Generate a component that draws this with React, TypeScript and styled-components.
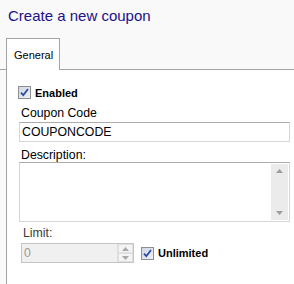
import React from "react";
import styled, { createGlobalStyle } from "styled-components";

const GlobalStyle = createGlobalStyle`
  html, body {
    margin: 0;
    padding: 0;
    background: #f9f9f9;
    font-family: "Liberation Sans", Arial, sans-serif;
  }
`;

const Page = styled.div`
  width: 294px;
  height: 284px;
  overflow: hidden;
  display: flex;
  flex-direction: column;
`;

const Title = styled.h1`
  margin: 0;
  padding: 7px 0 0 8px;
  height: 31px;
  box-sizing: border-box;
  font-size: 15px;
  line-height: 18px;
  font-weight: normal;
  color: #22108a;
`;

const TabBar = styled.div`
  display: flex;
  margin-top: 7px;
  padding-left: 6px;
  border-bottom: 1px solid #a3a3a3;
`;

const Tab = styled.div<{ $active?: boolean }>`
  width: 54px;
  height: 32px;
  box-sizing: border-box;
  border: 1px solid #a3a3a3;
  border-bottom: none;
  margin-bottom: -1px;
  background: ${(p) => (p.$active ? "#fff" : "#eee")};
  display: flex;
  align-items: center;
  padding-left: 7px;
  font-size: 11px;
  color: #000;
`;

const Panel = styled.div`
  flex: 1;
  margin-left: 6px;
  border-left: 1px solid #a3a3a3;
  background: #fff;
  padding: 16px 4px 0 12px;
  display: flex;
  flex-direction: column;
`;

const CheckRow = styled.label`
  display: flex;
  align-items: center;
  gap: 4px;
  height: 13px;
  font-size: 11px;
  font-weight: bold;
  color: #000;
`;

const Box = styled.span`
  width: 13px;
  height: 13px;
  box-sizing: border-box;
  border: 1px solid #8e8f8f;
  background: linear-gradient(135deg, #cfd6e6 0%, #eef1f7 100%);
  display: flex;
  align-items: center;
  justify-content: center;
  svg {
    display: block;
  }
`;

const Label = styled.div<{ $muted?: boolean }>`
  font-size: 12.3px;
  line-height: 14px;
  padding-left: 2px;
  color: ${(p) => (p.$muted ? "#3a3a3a" : "#000")};
`;

const TextInput = styled.div`
  height: 20px;
  box-sizing: border-box;
  border: 1px solid #d6d6d6;
  border-top-color: #acacac;
  background: #fff;
  font-size: 12.3px;
  line-height: 18px;
  padding-left: 2px;
  color: #000;
`;

const TextArea = styled.div`
  height: 60px;
  box-sizing: border-box;
  border: 1px solid #d6d6d6;
  border-top-color: #acacac;
  background: #fff;
  display: flex;
  justify-content: flex-end;
  padding: 1px;
`;

const ScrollTrack = styled.div`
  width: 17px;
  background: #ebebeb;
  display: flex;
  flex-direction: column;
  justify-content: space-between;
  align-items: center;
  padding: 5px 0;
`;

const LimitBlock = styled.div`
  margin-left: 2px;
  display: flex;
  flex-direction: column;
`;

const LimitRow = styled.div`
  display: flex;
  align-items: center;
  gap: 7px;
  margin-top: 3px;
`;

const NumberBox = styled.div`
  width: 113px;
  height: 20px;
  box-sizing: border-box;
  border: 1px solid #c4c4c4;
  background: #f0f0f0;
  display: flex;
  justify-content: space-between;
  font-size: 12.3px;
  line-height: 18px;
  color: #9a9a9a;
  padding-left: 2px;
`;

const Spinner = styled.div`
  width: 15px;
  display: flex;
  flex-direction: column;
  border-left: 1px solid #dcdcdc;
`;

const SpinButton = styled.div`
  flex: 1;
  background: #f4f4f4;
  border: 1px solid #e0e0e0;
  display: flex;
  align-items: center;
  justify-content: center;
`;

const Arrow = ({ up, color = "#a8a8a8" }: { up?: boolean; color?: string }) => (
  <svg width="7" height="4" viewBox="0 0 7 4">
    <path d={up ? "M0 4 L3.5 0 L7 4 Z" : "M0 0 L3.5 4 L7 0 Z"} fill={color} />
  </svg>
);

const Check = () => (
  <Box>
    <svg width="9" height="9" viewBox="0 0 9 9">
      <path d="M1 4.6 L3.3 7.2 L8 1" stroke="#2c4a9e" strokeWidth="1.8" fill="none" />
    </svg>
  </Box>
);

export default function App() {
  return (
    <Page>
      <GlobalStyle />
      <Title>Create a new coupon</Title>
      <TabBar>
        <Tab $active>General</Tab>
      </TabBar>
      <Panel>
        <CheckRow style={{ marginLeft: -1 }}>
          <Check />
          Enabled
        </CheckRow>
        <Label style={{ marginTop: 7, marginBottom: 2 }}>Coupon Code</Label>
        <TextInput>COUPONCODE</TextInput>
        <Label style={{ marginTop: 6, marginBottom: 0 }}>Description:</Label>
        <TextArea>
          <ScrollTrack>
            <Arrow up color="#9c9c9c" />
            <Arrow color="#9c9c9c" />
          </ScrollTrack>
        </TextArea>
        <LimitBlock>
          <Label $muted style={{ marginTop: 4 }}>Limit:</Label>
          <LimitRow>
            <NumberBox>
              0
              <Spinner>
                <SpinButton>
                  <Arrow up />
                </SpinButton>
                <SpinButton>
                  <Arrow />
                </SpinButton>
              </Spinner>
            </NumberBox>
            <CheckRow>
              <Check />
              Unlimited
            </CheckRow>
          </LimitRow>
        </LimitBlock>
      </Panel>
    </Page>
  );
}
